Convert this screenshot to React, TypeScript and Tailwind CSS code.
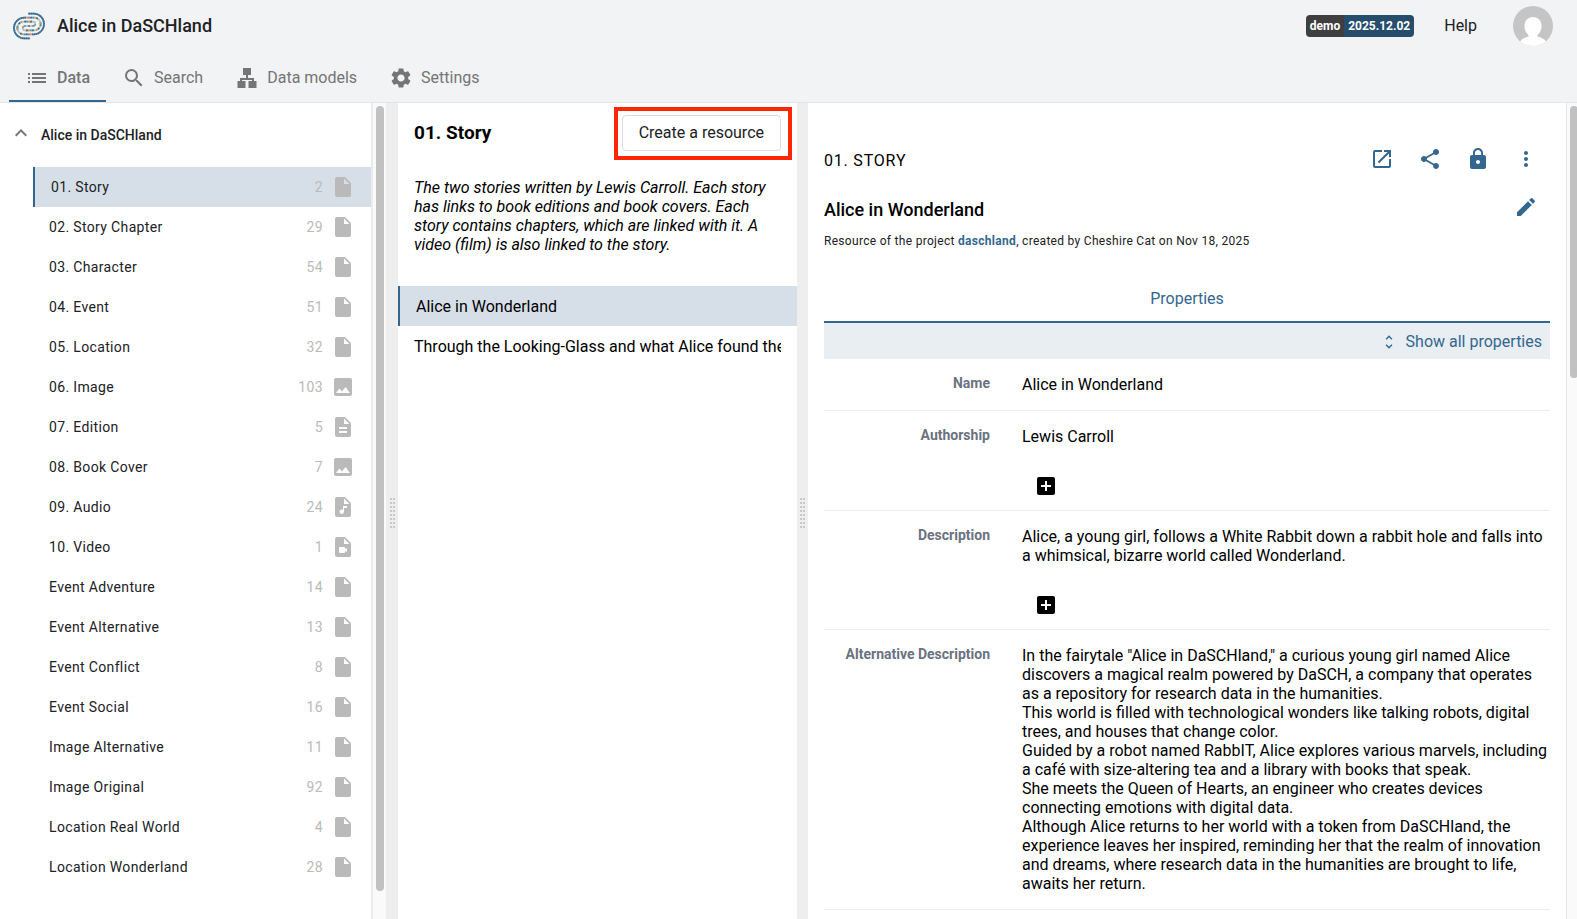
import type { ReactNode } from 'react';
import type { IconType } from 'react-icons';
import {
    MdAddBox,
    MdAudioFile,
    MdDescription,
    MdEdit,
    MdImage,
    MdInsertDriveFile,
    MdKeyboardArrowUp,
    MdList,
    MdLock,
    MdMoreVert,
    MdOpenInNew,
    MdSearch,
    MdSettings,
    MdShare,
    MdUnfoldMore,
    MdVideoFile,
} from 'react-icons/md';

type ResourceClass = { label: string; count: number; icon?: IconType };

const classes: ResourceClass[] = [
    { label: '01. Story', count: 2 },
    { label: '02. Story Chapter', count: 29 },
    { label: '03. Character', count: 54 },
    { label: '04. Event', count: 51 },
    { label: '05. Location', count: 32 },
    { label: '06. Image', count: 103, icon: MdImage },
    { label: '07. Edition', count: 5, icon: MdDescription },
    { label: '08. Book Cover', count: 7, icon: MdImage },
    { label: '09. Audio', count: 24, icon: MdAudioFile },
    { label: '10. Video', count: 1, icon: MdVideoFile },
    { label: 'Event Adventure', count: 14 },
    { label: 'Event Alternative', count: 13 },
    { label: 'Event Conflict', count: 8 },
    { label: 'Event Social', count: 16 },
    { label: 'Image Alternative', count: 11 },
    { label: 'Image Original', count: 92 },
    { label: 'Location Real World', count: 4 },
    { label: 'Location Wonderland', count: 28 },
];

const resources = ['Alice in Wonderland', 'Through the Looking-Glass and what Alice found there'];

const alternativeDescription = [
    'In the fairytale "Alice in DaSCHland," a curious young girl named Alice discovers a magical realm powered by DaSCH, a company that operates as a repository for research data in the humanities.',
    'This world is filled with technological wonders like talking robots, digital trees, and houses that change color.',
    'Guided by a robot named RabbIT, Alice explores various marvels, including a café with size-altering tea and a library with books that speak.',
    'She meets the Queen of Hearts, an engineer who creates devices connecting emotions with digital data.',
    'Although Alice returns to her world with a token from DaSCHland, the experience leaves her inspired, reminding her that the realm of innovation and dreams, where research data in the humanities are brought to life, awaits her return.',
];

// One arm of the coil, the other one is the same arm turned by 180 degrees
const OUTER = 'M85 41H101A31 31 0 0 1 101 103';
const INNER = 'M101 103H71A19 19 0 0 1 71 65H99A6.5 6.5 0 0 1 99 78H87';

function LogoArm() {
    return (
        <g fill="none" strokeWidth="5">
            <path d={INNER} stroke="#a9bccb" />
            <path d={INNER} stroke="#336790" strokeDasharray="5 13" />
            <path d={INNER} stroke="#e39a4c" strokeDasharray="5 19" strokeDashoffset="-6" />
            <path d={INNER} stroke="#c4507c" strokeDasharray="4 44" strokeDashoffset="-12" />
            <path d={INNER} stroke="#3fa39b" strokeDasharray="5 31" strokeDashoffset="-24" />
            <path d={OUTER} stroke="#7fa0bb" />
            <path d={OUTER} stroke="#336790" strokeDasharray="5 1" />
        </g>
    );
}

function Logo() {
    return (
        <svg viewBox="36 36 102 84" className="h-7 w-[34px]" aria-hidden="true">
            <LogoArm />
            <g transform="rotate(180 87 78)">
                <LogoArm />
            </g>
        </svg>
    );
}

function ModelsIcon() {
    return (
        <svg viewBox="0 0 24 24" className="size-6" fill="currentColor" aria-hidden="true">
            <path d="M8 2h8v7h-3v3h6v3h2.500v7h-8v-7H17v-1H7v1h3.500v7h-8v-7H5v-3h6V9H8z" />
        </svg>
    );
}

function Tab({ icon, label, active }: { icon: ReactNode; label: string; active?: boolean }) {
    return (
        <a
            href="#"
            className={`flex h-[47px] items-center gap-2 border-b-2 px-4 text-[#757575] ${active ? 'border-[#336790] font-medium' : 'border-transparent'}`}
        >
            {icon}
            {label}
        </a>
    );
}

function Gutter({ className }: { className: string }) {
    return (
        <div className={`flex shrink-0 items-center justify-center bg-[#eeeeee] pt-1 ${className}`}>
            <svg viewBox="0 0 5 30" className="h-[30px] w-[5px]" aria-hidden="true">
                <path d="M1 0V30M4 0V30" stroke="#c8c8c8" strokeWidth="2" strokeDasharray="2 2" />
            </svg>
        </div>
    );
}

function ToolButton({ label, children }: { label: string; children: ReactNode }) {
    return (
        <button aria-label={label} className="flex size-12 items-center justify-center">
            {children}
        </button>
    );
}

function Property({ label, addable, children }: { label: string; addable?: boolean; children: ReactNode }) {
    return (
        <div className="flex border-b border-[#e9eef3]">
            <dt className="w-[198px] shrink-0 pt-4 pr-8 text-right text-sm leading-4 font-bold text-[#6b7280]">{label}</dt>
            <dd className="min-w-0 flex-1 pt-4 leading-[19px]">
                {children}
                {addable ? (
                    <button aria-label={`Add ${label}`} className="mt-4 flex size-12 items-center justify-center">
                        <MdAddBox size={24} />
                    </button>
                ) : (
                    <div className="h-4" />
                )}
            </dd>
        </div>
    );
}

export default function App() {
    return (
        <div className="flex h-screen flex-col overflow-hidden bg-white font-[Roboto,sans-serif] text-base text-black">
            <header className="border-b border-[#e5e5e5] bg-[#f1f3f5]">
                <div className="flex h-[51px] items-center pr-6 pl-3">
                    <Logo />
                    <h1 className="ml-[11px] text-lg font-medium text-[#202124]">Alice in DaSCHland</h1>
                    <div className="ml-auto flex h-[22px] overflow-hidden rounded text-xs leading-[22px] font-bold text-white">
                        <span className="bg-[#3f3f3f] px-1">demo</span>
                        <span className="bg-[#264d6c] px-1">2025.12.02</span>
                    </div>
                    <a href="#" className="ml-[30px] text-[#202124]">Help</a>
                    <button aria-label="User menu" className="ml-9">
                        <svg viewBox="0 0 40 40" className="size-10">
                            <clipPath id="avatar">
                                <circle cx="20" cy="20" r="20" />
                            </clipPath>
                            <g clipPath="url(#avatar)">
                                <path fill="#c5c5c5" d="M0 0h40v40H0z" />
                                <path fill="#fff" d="M20 11c5 0 8.500 3.500 8.500 9 0 4-1.500 7-4 9v1.500c4 1 7 2.500 8.500 5V40H7v-4.500c1.500-2.500 4.500-4 8.500-5V29c-2.500-2-4-5-4-9 0-5.500 3.500-9 8.500-9z" />
                            </g>
                        </svg>
                    </button>
                </div>
                <nav className="flex pt-1 pl-[9px]">
                    <Tab active icon={<MdList size={24} />} label="Data" />
                    <Tab icon={<MdSearch size={24} />} label="Search" />
                    <Tab icon={<ModelsIcon />} label="Data models" />
                    <Tab icon={<MdSettings size={24} />} label="Settings" />
                </nav>
            </header>

            <div className="flex min-h-0 flex-1">
                {/* Class tree */}
                <aside className="flex w-[386px] shrink-0">
                    <div className="min-w-0 flex-1 overflow-hidden">
                        <button className="flex h-16 w-full items-center gap-2 pl-[9px] text-sm font-medium text-[#202124]">
                            <MdKeyboardArrowUp size={24} className="mb-1 text-[#757575]" />
                            Alice in DaSCHland
                        </button>
                        <ul className="pl-[33px] text-sm tracking-wide text-[#202124]">
                            {classes.map(({ label, count, icon: Icon = MdInsertDriveFile }, i) => (
                                <li key={label}>
                                    <a
                                        href="#"
                                        className={`flex h-10 items-center gap-2 px-4 ${i === 0 ? 'border-l-2 border-[#336790] bg-[#d6dfe8]' : ''}`}
                                    >
                                        <span className="flex-1">{label}</span>
                                        <span className="text-[#bababa]">{count}</span>
                                        <Icon size={24} className="text-[#bababa]" />
                                    </a>
                                </li>
                            ))}
                        </ul>
                    </div>
                    <div className="w-[15px] border-l-2 border-[#ebebeb] bg-[#fafafa] px-[3px] pt-[3px] pb-7">
                        <div className="h-full w-2 rounded-full bg-[#c1c1c1]" />
                    </div>
                </aside>

                <Gutter className="w-3" />

                {/* Resources of the selected class */}
                <section className="w-[399px] shrink-0 overflow-hidden">
                    <div className="flex items-center justify-between px-4 pt-3">
                        <h2 className="text-[19px] font-bold">01. Story</h2>
                        <div className="relative">
                            <button className="h-9 rounded border border-[#dadce0] px-4 text-[#202124]">Create a resource</button>
                            <div className="pointer-events-none absolute -top-2 -right-[11px] -bottom-[9px] -left-2 border-4 border-[#ff2600]" />
                        </div>
                    </div>
                    <p className="px-4 pt-[27px] pb-8 leading-[19px] italic">
                        The two stories written by Lewis Carroll. Each story has links to book editions and book covers. Each story contains
                        chapters, which are linked with it. A video (film) is also linked to the story.
                    </p>
                    <ul>
                        {resources.map((name, i) => (
                            <li key={name} className={`px-4 pt-0.5 leading-[38px] ${i === 0 ? 'border-l-2 border-[#336790] bg-[#d6dfe8]' : ''}`}>
                                <a href="#" className="block overflow-hidden whitespace-nowrap">{name}</a>
                            </li>
                        ))}
                    </ul>
                </section>

                <Gutter className="w-[11px]" />

                {/* Resource viewer */}
                <main className="min-w-0 flex-1 overflow-hidden px-4 pt-8">
                    <div className="flex h-12 items-center justify-between">
                        <span className="pt-1 tracking-wider uppercase">01. Story</span>
                        <div className="flex text-[#336790]">
                            <ToolButton label="Open in new tab"><MdOpenInNew size={24} /></ToolButton>
                            <ToolButton label="Share"><MdShare size={24} /></ToolButton>
                            <ToolButton label="Permissions"><MdLock size={24} /></ToolButton>
                            <ToolButton label="More"><MdMoreVert size={24} /></ToolButton>
                        </div>
                    </div>
                    <div className="flex h-12 items-center justify-between">
                        <h3 className="pt-1.5 text-lg font-medium">Alice in Wonderland</h3>
                        <div className="flex text-[#336790]">
                            <ToolButton label="Edit label"><MdEdit size={24} /></ToolButton>
                        </div>
                    </div>
                    <p className="pt-0.5 text-xs tracking-wide text-[#202124]">
                        Resource of the project <a href="#" className="font-bold text-[#336790]">daschland</a>, created by Cheshire Cat on Nov 18, 2025
                    </p>
                    <div className="mt-6 flex border-b-2 border-[#336790]">
                        <button className="h-12 flex-1 pt-1 text-[#336790]">Properties</button>
                    </div>
                    <div className="flex h-9 items-center justify-end bg-[#e9eef3] pr-2 text-[#336790]">
                        <button className="flex items-center gap-2 pt-0.5">
                            <MdUnfoldMore size={18} />
                            Show all properties
                        </button>
                    </div>
                    <dl>
                        <Property label="Name">Alice in Wonderland</Property>
                        <Property label="Authorship" addable>Lewis Carroll</Property>
                        <Property label="Description" addable>
                            Alice, a young girl, follows a White Rabbit down a rabbit hole and falls into a whimsical, bizarre world called Wonderland.
                        </Property>
                        <Property label="Alternative Description">
                            {alternativeDescription.map((line) => (
                                <p key={line}>{line}</p>
                            ))}
                        </Property>
                    </dl>
                </main>
                <div className="w-[11px] shrink-0 overflow-hidden border-l border-[#e5e5e5] bg-[#fafafa] pt-[3px] pl-[3px]">
                    <div className="h-[272px] w-2 rounded-full bg-[#c1c1c1]" />
                </div>
            </div>
        </div>
    );
}
